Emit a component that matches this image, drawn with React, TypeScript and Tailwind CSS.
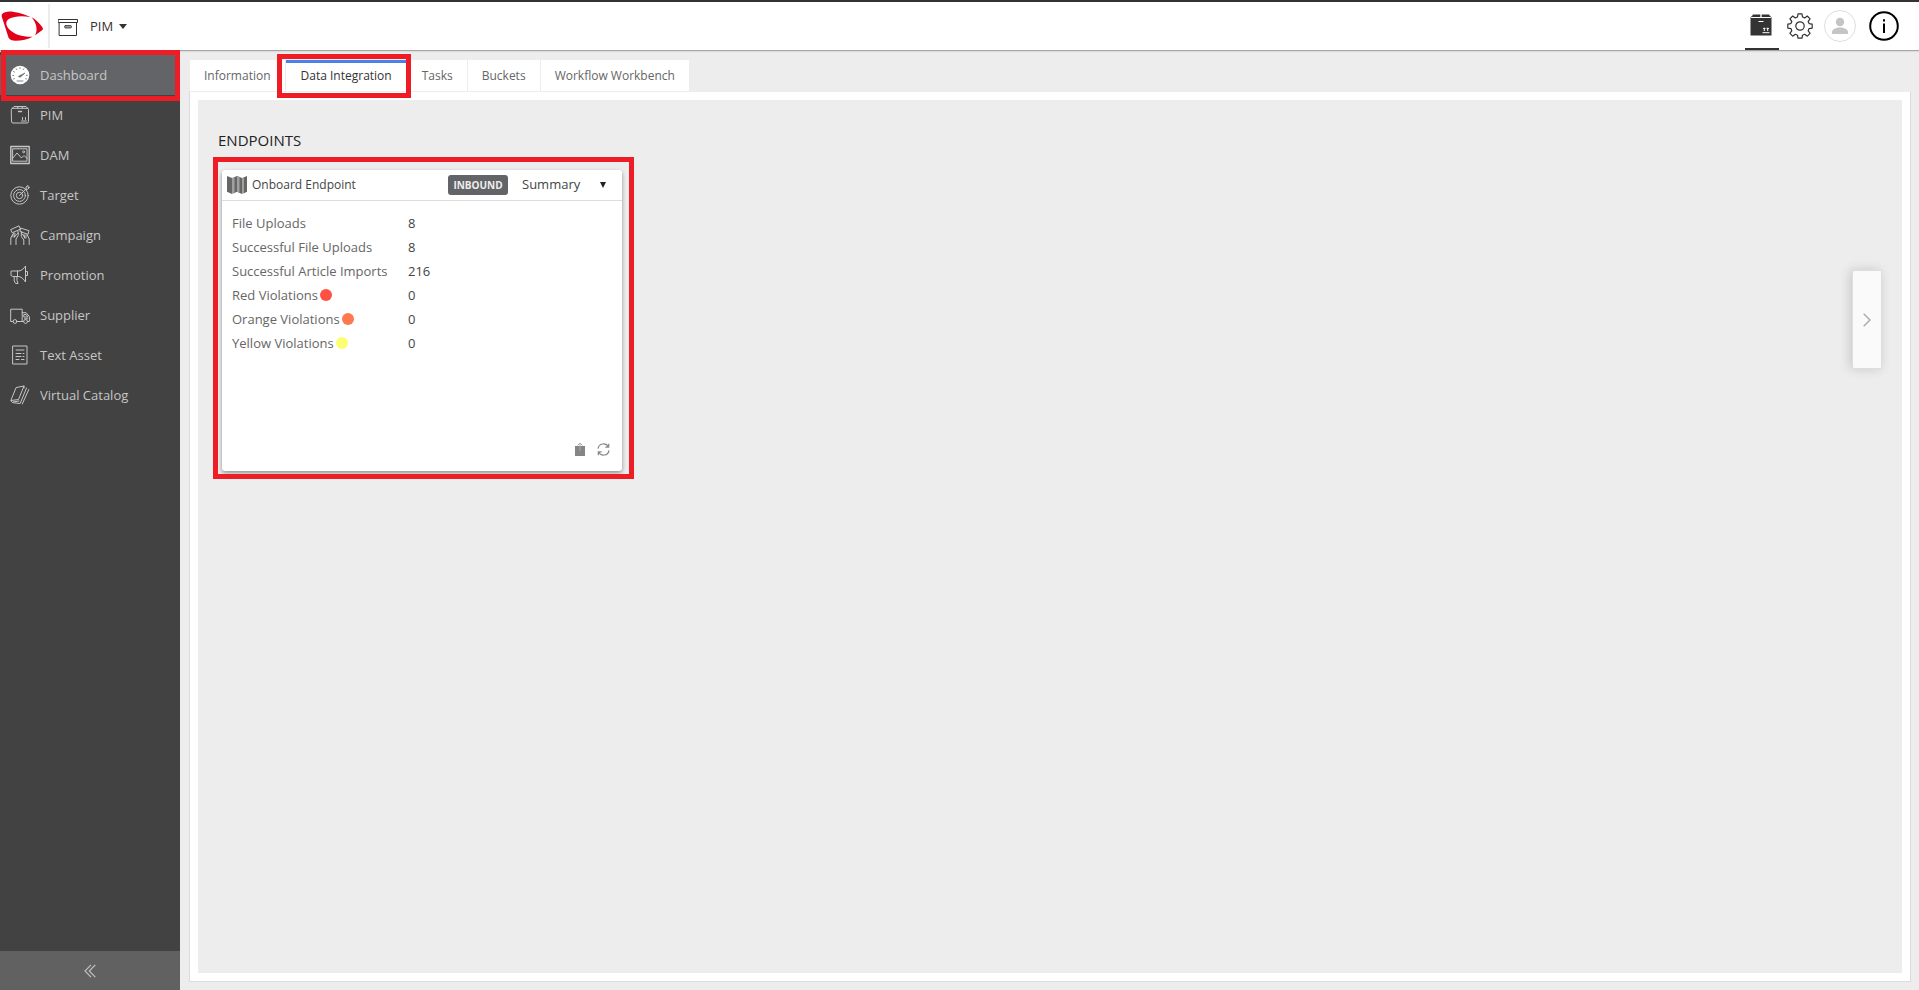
import type { ReactNode } from "react";

function Icon({ children, className = "size-5", box = 20 }: { children: ReactNode; className?: string; box?: number }) {
  return (
    <svg
      viewBox={`0 0 ${box} ${box}`}
      className={`shrink-0 ${className}`}
      fill="none"
      stroke="currentColor"
      strokeWidth="1"
      strokeLinecap="round"
      strokeLinejoin="round"
      aria-hidden="true"
    >
      {children}
    </svg>
  );
}

function Highlight({ className }: { className: string }) {
  return <span aria-hidden="true" className={`pointer-events-none absolute z-10 border-[5px] border-[#ee1c25] ${className}`} />;
}

const menu: { label: string; icon: ReactNode }[] = [
  {
    label: "Dashboard",
    icon: (
      <>
        <circle cx="10" cy="10" r="9.3" fill="#fff" stroke="none" />
        <g stroke="#636467">
          <path d="M8.6 11.2 15 8 10.2 12.2Z" fill="#636467" strokeWidth=".6" />
          <path
            strokeWidth=".8"
            d="M10 2.600v1M6.200 3.800l.5.800M3.600 6.600l.8.400M2.700 10.400h1M3.600 14l.8-.4M13.800 3.800l-.5.800M17.300 10.400h-1M16.400 14l-.8-.4M7 16h6"
          />
        </g>
      </>
    ),
  },
  {
    label: "PIM",
    icon: (
      <>
        <path d="M1.5 4.5 4 1.5h12l2.5 3v12a1.5 1.5 0 0 1-1.5 1.5H3a1.5 1.5 0 0 1-1.5-1.5Z" />
        <path d="M2 3.300h16M8 1.500l-.5 2M12 1.500l.5 2" />
        <path d="M8.500 6.500h3" strokeWidth="1.400" />
        <path d="M11.500 16h5M12.500 14.500v-2M15.500 14.500v-2" />
      </>
    ),
  },
  {
    label: "DAM",
    icon: (
      <>
        <path d="M.8 1.5h18.4v17H.8Z" strokeWidth="1.4" />
        <path d="M3 3.8h14v12.4H3ZM3 13l4-5 4.5 5 2.5-2.500 3 3" />
        <circle cx="13.6" cy="6.8" r="1" />
      </>
    ),
  },
  {
    label: "Target",
    icon: (
      <>
        <circle cx="9.5" cy="10.500" r="8.700" />
        <circle cx="9.500" cy="10.500" r="5.900" />
        <circle cx="9.500" cy="10.500" r="3.200" />
        <path d="M9.500 10.500 16 4M16 4V2l2-1.500V2.300h1.600L18 4Z" />
      </>
    ),
  },
  {
    label: "Campaign",
    icon: (
      <>
        <path d="M1 4.500 9 .8l1.500 3.400L2.500 7.600ZM11 3.200l8 2.500-1 3.600-7.600-2.600Z" />
        <path d="M.8 19.500V13l2-4 1.700-1M6 19.500V14l2.200-3.500V8L6.500 9.500 4.500 12M3 9.500v2.500M5 8.500 4.500 12M8.200 8l-.4-2" />
        <path d="M19.200 19.500V14l-2-4.500M13.800 19.500V15l-2.500-3.500V8.500l2 1.500 1.500 3M16 10v3M14 9.500l.8 3.500M11.300 8.500l.5-2" />
      </>
    ),
  },
  {
    label: "Promotion",
    icon: (
      <path d="M1.500 6H9c2.800-.6 5-2.600 6.500-5v16C14 14.500 12 12.300 9 11.500H2.800L1 10.500V7ZM7.500 6v5.500M15.500 6.500h2v4h-2M4.200 11.500v4.500l1.500 2.500H8L7 15.500v-4" />
    ),
  },
  {
    label: "Supplier",
    icon: (
      <>
        <path d="M3 16.500H.7V4.200h11.500v12.300H7M12.200 7.700h4l3.200 4v4.800h-1.600M13.500 16.500h-1.300M14.200 9.500h2l1.600 2.500h-3.600ZM14.500 13.800h3" />
        <circle cx="5" cy="16.500" r="1.900" />
        <circle cx="15.600" cy="16.500" r="1.900" />
      </>
    ),
  },
  {
    label: "Text Asset",
    icon: (
      <>
        <path d="M3 1h14v18H3Z" />
        <path d="M6 5h8M6 8.500h5M6 11.500h5M6 14.500h3M13 8.500h1M13 11.500h1M11.500 14.500H14" />
      </>
    ),
  },
  {
    label: "Virtual Catalog",
    icon: (
      <>
        <path d="M6.500 2.500 14 1 8.500 14.500 1.200 15.500Z" />
        <path d="M1.200 15.500c0 1.500.8 2 2 2.200l7 .8L16.500 3M14 1v2M12.300 19 18.800 4.500M3 17l6-1" />
      </>
    ),
  },
];

const tabs = ["Information", "Data Integration", "Tasks", "Buckets", "Workflow Workbench"];

const stats: { label: string; value: number; dot?: string }[] = [
  { label: "File Uploads", value: 8 },
  { label: "Successful File Uploads", value: 8 },
  { label: "Successful Article Imports", value: 216 },
  { label: "Red Violations", value: 0, dot: "bg-[#ff5044]" },
  { label: "Orange Violations", value: 0, dot: "bg-[#ff784e]" },
  { label: "Yellow Violations", value: 0, dot: "bg-[#fdfd72]" },
];

function Header() {
  return (
    <header className="relative flex h-[51px] shrink-0 items-stretch border-t-2 border-b border-t-[#333] border-b-[#a6a6a6] bg-white shadow-[0_1px_1px_#ddd]">
      <a href="#home" aria-label="Home" className="my-[2px] flex w-[50px] items-center border-r-2 border-[#ececec] pl-px">
        <svg viewBox="0 0 132 92" className="h-[30px] w-[43px]" fill="#e2001a" aria-hidden="true">
          <path d="M3 10C9 2 24 0 40 3 58 6 76 11 91 19 68 14 40 15 25 24c-12 7-11 20 0 32 16 17 43 24 72 23-14 8-34 12-52 12-12 0-18-3-22-10L5 25C2 19 1 14 3 10Z" />
          <path d="M94 19c12 6 24 18 33 31 3 4 2 7-2 10l-21 15c9-14 7-35-10-56Z" />
        </svg>
      </a>
      <button type="button" className="flex items-center gap-3 pt-px pl-2 text-[13px] text-[#333]">
        <Icon>
          <path d="M.5 2.500h19v3H.5ZM1.500 5.500h17v13h-17Z" strokeLinejoin="miter" />
          <rect x="6.500" y="8.500" width="7" height="2.500" rx="1.200" fill="#999" strokeWidth=".8" />
        </Icon>
        <span className="flex items-center gap-[6px]">
          PIM
          <svg viewBox="0 0 8 5" className="h-[5px] w-2" fill="#333" aria-hidden="true">
            <path d="M0 0h8L4 5Z" />
          </svg>
        </span>
      </button>
      <div className="ml-auto flex items-center pr-[20px] text-[#333]">
        <button type="button" aria-label="Products" className="mr-2 flex h-full w-[34px] items-center border-b-2 border-[#333] pl-[5px]">
          <svg viewBox="0 0 22 22" className="size-[22px]" aria-hidden="true">
            <path d="M3 .5h7.300V3H1ZM11.700.5H19L21 3h-9.300Z" fill="#333" />
            <path d="M.5 4h21v17.500H.5Z" fill="#333" />
            <path d="M.5 3.800 3 1M21.500 3.800 19 1" stroke="#777" />
            <path
              d="M8.500 7.500h5M12.500 18.700h7M14.300 17v-3M17.700 17v-3M13.200 15l1.100-1.200 1.100 1.200M16.600 15l1.100-1.200 1.100 1.200"
              stroke="#fff"
              fill="none"
            />
          </svg>
        </button>
        <button type="button" aria-label="Settings" className="mr-[11px]">
          <Icon className="size-[26px]" box={26}>
            <circle cx="13" cy="13" r="4.200" strokeWidth="1.200" />
            <path
              strokeWidth="1.200"
              d="M11 .8h4l.5 3.200 2.200.9 2.600-1.900 2.800 2.800-1.900 2.600.9 2.200 3.100.5v4l-3.100.5-.9 2.200 1.900 2.600-2.800 2.800-2.600-1.900-2.200.9-.5 3h-4l-.5-3-2.200-.9-2.600 1.900-2.800-2.800 1.900-2.600-.9-2.200-3.100-.5v-4l3.100-.5.9-2.200-1.900-2.600 2.800-2.800L8.300 4.900l2.200-.9Z"
            />
          </Icon>
        </button>
        <button type="button" aria-label="Profile" className="mr-[13px]">
          <svg viewBox="0 0 32 32" className="size-8" aria-hidden="true">
            <circle cx="16" cy="16" r="15.500" fill="#fff" stroke="#ddd" />
            <circle cx="16" cy="12" r="4.200" fill="#c4c4c4" />
            <path d="M8 24v-2c0-3 4.500-4.500 8-4.500s8 1.500 8 4.500v2Z" fill="#c4c4c4" />
          </svg>
        </button>
        <button type="button" aria-label="About">
          <svg viewBox="0 0 30 30" className="size-[30px]" aria-hidden="true">
            <circle cx="15" cy="15" r="13.800" fill="none" stroke="#000" strokeWidth="2" />
            <path d="M14 8.200h2v2.300h-2ZM14 12.500h2V22h-2Z" fill="#000" />
          </svg>
        </button>
      </div>
    </header>
  );
}

function Sidebar() {
  return (
    <aside className="flex w-[180px] shrink-0 flex-col bg-[#424242] pt-1 text-[#c6c6c6]">
      <nav className="flex flex-col">
        {menu.map(({ label, icon }, i) => (
          <a
            key={label}
            href={`#${label.toLowerCase().replace(" ", "-")}`}
            aria-current={i === 0 ? "page" : undefined}
            className={`relative flex h-10 items-center gap-[10px] pl-[10px] text-[13px] font-medium ${i === 0 ? "bg-[#636467]" : ""}`}
          >
            <Icon>{icon}</Icon>
            <span className="pt-px">{label}</span>
            {i === 0 && <Highlight className="-top-[5px] -bottom-[6px] left-px right-0" />}
          </a>
        ))}
      </nav>
      <button type="button" aria-label="Collapse menu" className="mt-auto flex h-[39px] items-center justify-center bg-[#616161]">
        <svg viewBox="0 0 12 14" className="h-[14px] w-3" fill="none" stroke="#c0c0c0" strokeWidth="1.200" aria-hidden="true">
          <path d="M7 .8 1 7l6 6.200M11.300.8l-6 6.200 6 6.200" />
        </svg>
      </button>
    </aside>
  );
}

function EndpointCard() {
  return (
    <section className="relative flex h-[301px] w-[400px] flex-col rounded-[3px] bg-white shadow-[0_2px_4px_rgba(0,0,0,0.4)]">
      <Highlight className="-top-[13px] -bottom-2 -left-[9px] -right-3" />
      <div className="flex h-[31px] items-center border-b border-[#dcdcdc] pl-[5px] pr-4">
        <svg viewBox="0 0 20 18" className="mr-[5px] h-[18px] w-5" aria-hidden="true">
          <path d="M0 0 5 2v16l-5-2.200ZM6.500 1.500 10 0v15.800L6.500 17.500ZM10 0l5 2v16l-5-2.200ZM16.500 1.500 20 0v15.800l-3.500 1.700Z" fill="#666" />
          <path d="m5 2 2.500-1v15.800L5 18ZM10 0l2.500 1v15.800l-2.500-1ZM15 2l2-.8V17l-2 1Z" fill="#a0a0a0" />
        </svg>
        <h3 className="text-[12px] font-medium text-[#444]">Onboard Endpoint</h3>
        <span className="ml-auto flex h-5 w-[60px] items-center justify-center rounded-[3px] bg-[#636467] text-[10px] font-bold text-[#eee]">
          INBOUND
        </span>
        <span className="relative ml-[14px] flex w-[84px] items-center">
          <select aria-label="Endpoint view" className="w-full appearance-none bg-transparent text-[13px] text-[#444]">
            <option>Summary</option>
          </select>
          <svg viewBox="0 0 6 6" className="pointer-events-none absolute right-0 size-[6px]" fill="#222" aria-hidden="true">
            <path d="M0 0h6L3 6Z" />
          </svg>
        </span>
      </div>
      <dl className="flex flex-col px-[10px] pt-[10px] text-[13px] leading-6">
        {stats.map(({ label, value, dot }) => (
          <div key={label} className="flex">
            <dt className="flex w-44 items-center gap-[2px] text-[#666]">
              {label}
              {dot && <span className={`size-3 rounded-full ${dot}`} />}
            </dt>
            <dd className="text-[#444]">{value}</dd>
          </div>
        ))}
      </dl>
      <div className="mt-auto flex items-center justify-end gap-3 px-3 pb-[15px]">
        <button type="button" aria-label="Export">
          <svg viewBox="0 0 10 14" className="h-[14px] w-[10px]" aria-hidden="true">
            <path d="M0 4h10v10H0Z" fill="#858585" />
            <path d="M5 9V1M2.500 3.500 5 1l2.500 2.500" stroke="#aaa" fill="none" />
          </svg>
        </button>
        <button type="button" aria-label="Refresh">
          <svg viewBox="0 0 13 13" className="size-[13px]" fill="none" stroke="#888" strokeWidth="1.200" aria-hidden="true">
            <path d="M1 5.700A5.500 5.500 0 0 1 11.400 4M12 7.300A5.500 5.500 0 0 1 1.600 9M11.700.8v3.400H8.300M1.300 12.200V8.800h3.400" />
          </svg>
        </button>
      </div>
    </section>
  );
}

export default function App() {
  return (
    <div className="flex min-h-screen flex-col bg-[#ededed] font-['Open_Sans','Noto_Sans',sans-serif]">
      <Header />
      <div className="flex grow">
        <Sidebar />
        <main className="flex grow flex-col pt-[9px] pr-2 pb-2 pl-[9px]">
          <div role="tablist" className="flex pl-px">
            {tabs.map((tab, i) => (
              <button
                key={tab}
                type="button"
                role="tab"
                aria-selected={i === 1}
                className={`relative h-[31px] border-r border-[#ededed] bg-white text-[12px] ${
                  i === 1 ? "px-[15px] font-medium text-[#333] shadow-[inset_0_3px_0_#4a80e8]" : "px-[14px] text-[#666]"
                }`}
              >
                {tab}
                {i === 1 && <Highlight className="-top-[6px] -bottom-[7px] -left-[9px] -right-1" />}
              </button>
            ))}
          </div>
          <div className="flex grow flex-col border border-t-[#ededed] border-[#dcdcdc] bg-white p-2">
            <div className="flex grow items-start justify-between bg-[#ededed] px-5 pt-[29px]">
              <div>
                <h2 className="mb-[19px] text-[15px] leading-[22px] font-medium text-[#222]">ENDPOINTS</h2>
                <div className="pl-1">
                  <EndpointCard />
                </div>
              </div>
              <button
                type="button"
                aria-label="Open side panel"
                className="mt-[141px] flex h-[99px] w-[30px] items-center justify-center rounded-l-[2px] border border-[#dedede] bg-[#fafafa] shadow-[-2px_0_12px_rgba(0,0,0,0.16)]"
              >
                <svg viewBox="0 0 8 14" className="h-[14px] w-2" fill="none" stroke="#aaa" strokeWidth="1.400" aria-hidden="true">
                  <path d="m.7.7 6.300 6.300-6.300 6.300" />
                </svg>
              </button>
            </div>
          </div>
        </main>
      </div>
    </div>
  );
}
